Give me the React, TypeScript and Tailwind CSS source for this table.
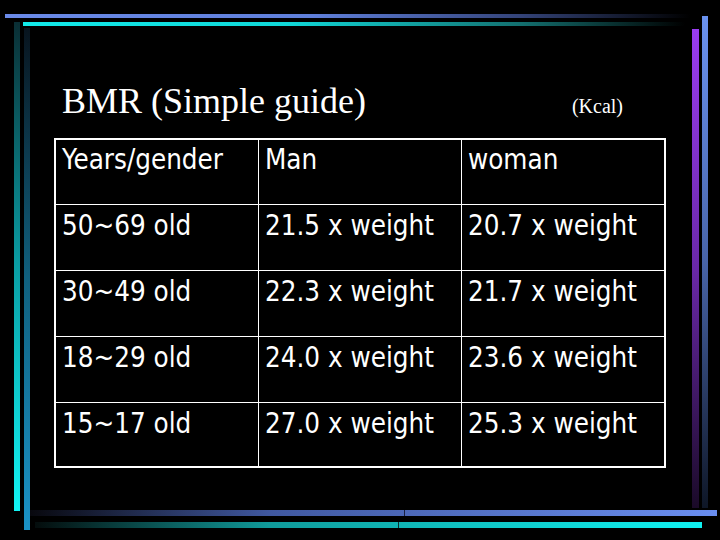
import React from "react";

const rows: [string, string, string][] = [
  ["Years/gender", "Man", "woman"],
  ["50~69 old", "21.5 x weight", "20.7 x weight"],
  ["30~49 old", "22.3 x weight", "21.7 x weight"],
  ["18~29 old", "24.0 x weight", "23.6 x weight"],
  ["15~17 old", "27.0 x weight", "25.3 x weight"],
];

const rowHeights = ["h-[65px]", "h-[66px]", "h-[66px]", "h-[66px]", "h-[63px]"];
const rowPads = ["pt-[6px]", "pt-[7px]", "pt-[7px]", "pt-[7px]", "pt-[7px]"];

function Frame() {
  return (
    <svg className="absolute inset-0" width={720} height={540} viewBox="0 0 720 540">
      <defs>
        <linearGradient id="topBlue" x1="0" y1="0" x2="1" y2="0">
          <stop offset="0" stopColor="#6a8ae8" />
          <stop offset="0.45" stopColor="#5f7fda" />
          <stop offset="0.75" stopColor="#34447a" />
          <stop offset="1" stopColor="#000000" />
        </linearGradient>
        <linearGradient id="topCyan" x1="0" y1="0" x2="1" y2="0">
          <stop offset="0" stopColor="#12eaea" />
          <stop offset="0.4" stopColor="#10d8d8" />
          <stop offset="0.75" stopColor="#137070" />
          <stop offset="1" stopColor="#000000" />
        </linearGradient>
        <linearGradient id="left1" x1="0" y1="0" x2="0" y2="1">
          <stop offset="0" stopColor="#0a2e34" />
          <stop offset="0.5" stopColor="#0a9ea4" />
          <stop offset="1" stopColor="#12f4f4" />
        </linearGradient>
        <linearGradient id="left2" x1="0" y1="0" x2="0" y2="1">
          <stop offset="0" stopColor="#08141e" />
          <stop offset="0.5" stopColor="#10607e" />
          <stop offset="1" stopColor="#1a92c6" />
        </linearGradient>
        <linearGradient id="rightPurple" x1="0" y1="0" x2="0" y2="1">
          <stop offset="0" stopColor="#9a3cf2" />
          <stop offset="0.5" stopColor="#6a28a8" />
          <stop offset="1" stopColor="#1a0a28" />
        </linearGradient>
        <linearGradient id="rightBlue" x1="0" y1="0" x2="0" y2="1">
          <stop offset="0" stopColor="#6a92f0" />
          <stop offset="0.5" stopColor="#4864a8" />
          <stop offset="1" stopColor="#0e1626" />
        </linearGradient>
        <linearGradient id="botBlue" x1="0" y1="0" x2="1" y2="0">
          <stop offset="0" stopColor="#08080e" />
          <stop offset="0.35" stopColor="#4058a0" />
          <stop offset="1" stopColor="#6a8ef0" />
        </linearGradient>
        <linearGradient id="botCyan" x1="0" y1="0" x2="1" y2="0">
          <stop offset="0" stopColor="#040c0c" />
          <stop offset="0.35" stopColor="#109a9a" />
          <stop offset="1" stopColor="#10f2f2" />
        </linearGradient>
      </defs>
      <rect x={5} y={14} width={685} height={4} fill="url(#topBlue)" />
      <rect x={23} y={22} width={662} height={4} fill="url(#topCyan)" />
      <rect x={14} y={22} width={6} height={489} fill="url(#left1)" />
      <rect x={24} y={28} width={6} height={502} fill="url(#left2)" />
      <rect x={692} y={29} width={7} height={479} fill="url(#rightPurple)" />
      <rect x={702} y={16} width={6} height={492} fill="url(#rightBlue)" />
      <rect x={30} y={510} width={687} height={6} fill="url(#botBlue)" />
      <rect x={404} y={510} width={1} height={6} fill="#1a2040" />
      <rect x={35} y={522} width={667} height={6} fill="url(#botCyan)" />
      <rect x={398} y={522} width={1} height={6} fill="#0a3030" />
    </svg>
  );
}

export default function App() {
  return (
    <div className="relative w-[720px] h-[540px] bg-black overflow-hidden text-white">
      <Frame />
      <div className="relative pl-[54px] pt-[83px]">
        <div className="flex items-baseline w-[612px] pr-[43px]">
          <h1 className="ml-[8px] text-[36px] leading-none font-['Liberation_Serif',serif] font-normal">
            BMR (Simple guide)
          </h1>
          <span className="ml-auto text-[20px] leading-none font-['Liberation_Serif',serif]">(Kcal)</span>
        </div>
        <div className="mt-[19px] w-[612px] border-2 border-white grid grid-cols-[203px_203px_202px] font-['DejaVu_Sans_Condensed','DejaVu_Sans',sans-serif] text-[27.5px] leading-none">
          {rows.map((r, i) =>
            r.map((c, j) => (
              <div
                key={`${i}-${j}`}
                className={`${rowHeights[i]} ${rowPads[i]} pl-[6px] whitespace-nowrap ${j < 2 ? "border-r border-white" : ""} ${
                  i < rows.length - 1 ? "border-b border-white" : ""
                }`}
              >
                {c}
              </div>
            ))
          )}
        </div>
      </div>
    </div>
  );
}
